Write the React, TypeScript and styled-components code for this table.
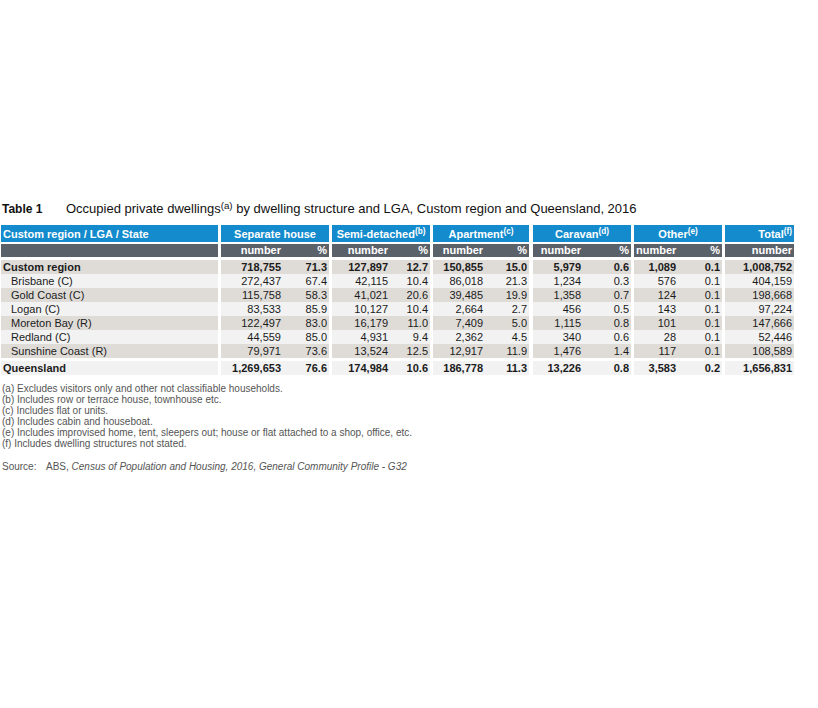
import React from 'react';
import styled, { createGlobalStyle } from 'styled-components';

const GlobalStyle = createGlobalStyle`
  body {
    margin: 0;
    background: #fff;
    font-family: "Liberation Sans", Arial, sans-serif;
  }
`;

const Page = styled.div`
  padding: 201px 0 0 1px;
`;

const TitleRow = styled.div`
  display: flex;
  align-items: baseline;
  height: 24px;
  color: #111;
`;

const TableNo = styled.span`
  width: 64px;
  padding-left: 1px;
  font-size: 12px;
  font-weight: bold;
`;

const Caption = styled.span`
  font-size: 13px;
`;

const Sup = styled.sup`
  font-size: 0.75em;
  line-height: 0;
  vertical-align: 0.45em;
`;

const Table = styled.table`
  table-layout: fixed;
  border-collapse: separate;
  border-spacing: 0;
  width: 793px;
  font-size: 11px;
  color: #1b1b1b;
`;

type CellProps = { $first?: boolean; $align?: 'left' | 'right' | 'center'; $gap?: number };

const HeadCell = styled.th<CellProps>`
  height: 17px;
  padding: 0 2px;
  background: #148bcd;
  color: #fff;
  font-weight: bold;
  text-align: ${(p) => p.$align || 'center'};
  border-left: ${(p) => (p.$first ? 0 : p.$gap || 3)}px solid #fff;
  white-space: nowrap;
`;

const SubCell = styled.th<CellProps>`
  height: 13px;
  padding: 0 2px;
  background: #5b6169;
  color: #fff;
  font-weight: bold;
  text-align: right;
  border-top: 2px solid #fff;
  border-left: ${(p) => (p.$first ? 0 : p.$gap || 0)}px solid #fff;
  line-height: 13px;
`;

type RowProps = { $shade: boolean; $bold?: boolean; $gapTop?: number };

const BodyRow = styled.tr<RowProps>`
  background: ${(p) => (p.$shade ? '#dfdcd8' : '#f2f2f2')};
  font-weight: ${(p) => (p.$bold ? 'bold' : 'normal')};
  & > td {
    border-top: ${(p) => p.$gapTop || 0}px solid #fff;
  }
`;

const Cell = styled.td<CellProps>`
  height: 14px;
  padding: 0 2px;
  line-height: 14px;
  text-align: right;
  border-left: ${(p) => p.$gap || 0}px solid #fff;
  white-space: nowrap;
`;

const LabelCell = styled.td<{ $indent: boolean }>`
  height: 14px;
  padding: 0 0 0 ${(p) => (p.$indent ? 10 : 2)}px;
  line-height: 14px;
  text-align: left;
  white-space: nowrap;
`;

const Notes = styled.div`
  margin-top: 8px;
  padding-left: 1px;
  font-size: 10px;
  line-height: 11px;
  color: #555;
`;

const Source = styled.div`
  margin-top: 12px;
  padding-left: 1px;
  font-size: 10px;
  color: #555;
  display: flex;
`;

const SourceLabel = styled.span`
  width: 44px;
`;

const cols = [217, 65, 46, 61, 40, 55, 44, 54, 48, 47, 44, 72];
const gaps = [0, 3, 0, 3, 0, 3, 0, 4, 0, 3, 0, 3];

type Row = { label: string; values: string[]; bold?: boolean };

const rows: Row[] = [
  { label: 'Custom region', bold: true, values: ['718,755', '71.3', '127,897', '12.7', '150,855', '15.0', '5,979', '0.6', '1,089', '0.1', '1,008,752'] },
  { label: 'Brisbane (C)', values: ['272,437', '67.4', '42,115', '10.4', '86,018', '21.3', '1,234', '0.3', '576', '0.1', '404,159'] },
  { label: 'Gold Coast (C)', values: ['115,758', '58.3', '41,021', '20.6', '39,485', '19.9', '1,358', '0.7', '124', '0.1', '198,668'] },
  { label: 'Logan (C)', values: ['83,533', '85.9', '10,127', '10.4', '2,664', '2.7', '456', '0.5', '143', '0.1', '97,224'] },
  { label: 'Moreton Bay (R)', values: ['122,497', '83.0', '16,179', '11.0', '7,409', '5.0', '1,115', '0.8', '101', '0.1', '147,666'] },
  { label: 'Redland (C)', values: ['44,559', '85.0', '4,931', '9.4', '2,362', '4.5', '340', '0.6', '28', '0.1', '52,446'] },
  { label: 'Sunshine Coast (R)', values: ['79,971', '73.6', '13,524', '12.5', '12,917', '11.9', '1,476', '1.4', '117', '0.1', '108,589'] },
];

const total: Row = {
  label: 'Queensland',
  bold: true,
  values: ['1,269,653', '76.6', '174,984', '10.6', '186,778', '11.3', '13,226', '0.8', '3,583', '0.2', '1,656,831'],
};

const groups = [
  { title: 'Separate house', note: '' },
  { title: 'Semi-detached', note: 'b' },
  { title: 'Apartment', note: 'c' },
  { title: 'Caravan', note: 'd' },
  { title: 'Other', note: 'e' },
];

const notes = [
  '(a) Excludes visitors only and other not classifiable households.',
  '(b) Includes row or terrace house, townhouse etc.',
  '(c) Includes flat or units.',
  '(d) Includes cabin and houseboat.',
  '(e) Includes improvised home, tent, sleepers out; house or flat attached to a shop, office, etc.',
  '(f) Includes dwelling structures not stated.',
];

function DataRow({ row, shade, gapTop }: { row: Row; shade: boolean; gapTop?: number }) {
  return (
    <BodyRow $shade={shade} $bold={row.bold} $gapTop={gapTop}>
      <LabelCell $indent={!row.bold}>{row.label}</LabelCell>
      {row.values.map((v, i) => (
        <Cell key={i} $gap={gaps[i + 1]}>
          {v}
        </Cell>
      ))}
    </BodyRow>
  );
}

export default function App() {
  return (
    <Page>
      <GlobalStyle />
      <TitleRow>
        <TableNo>Table 1</TableNo>
        <Caption>
          Occupied private dwellings<Sup>(a)</Sup> by dwelling structure and LGA, Custom region and Queensland, 2016
        </Caption>
      </TitleRow>
      <Table>
        <colgroup>
          {cols.map((w, i) => (
            <col key={i} style={{ width: w }} />
          ))}
        </colgroup>
        <thead>
          <tr>
            <HeadCell $first $align="left">
              Custom region / LGA / State
            </HeadCell>
            {groups.map((g, i) => (
              <HeadCell key={g.title} colSpan={2} $gap={gaps[i * 2 + 1]}>
                {g.title}
                {g.note && <Sup>({g.note})</Sup>}
              </HeadCell>
            ))}
            <HeadCell $align="right">
              Total<Sup>(f)</Sup>
            </HeadCell>
          </tr>
          <tr>
            <SubCell $first />
            {cols.slice(1).map((_, i) => (
              <SubCell key={i} $gap={gaps[i + 1]}>
                {i % 2 === 0 ? 'number' : '%'}
              </SubCell>
            ))}
          </tr>
        </thead>
        <tbody>
          {rows.map((r, i) => (
            <DataRow key={r.label} row={r} shade={i % 2 === 0} gapTop={i === 0 ? 3 : 0} />
          ))}
          <DataRow row={total} shade={false} gapTop={3} />
        </tbody>
      </Table>
      <Notes>
        {notes.map((n) => (
          <div key={n}>{n}</div>
        ))}
      </Notes>
      <Source>
        <SourceLabel>Source:</SourceLabel>
        <span>
          ABS, <i>Census of Population and Housing, 2016, General Community Profile - G32</i>
        </span>
      </Source>
    </Page>
  );
}
